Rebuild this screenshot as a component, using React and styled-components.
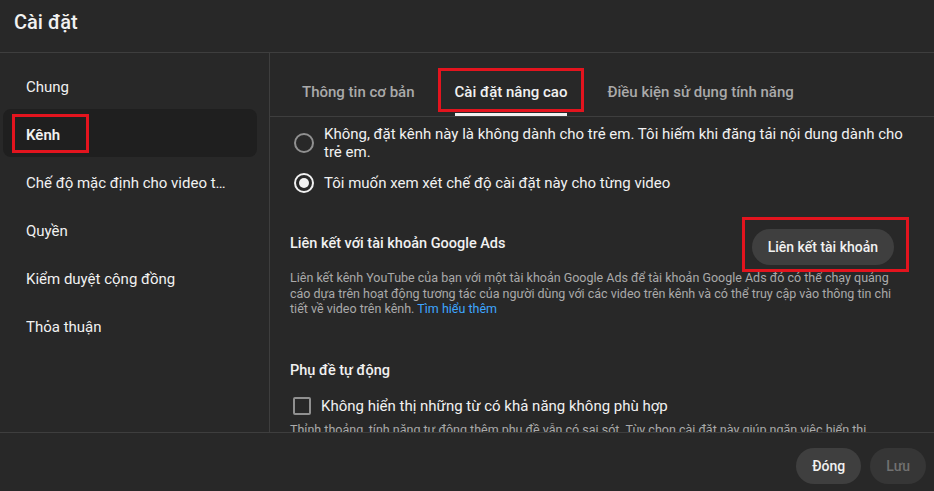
import { styled, createGlobalStyle } from 'styled-components';

const GlobalStyle = createGlobalStyle`
  html, body {
    margin: 0;
    padding: 0;
    background: #282828;
  }
  body {
    font-family: Roboto, 'Noto Sans', Arial, sans-serif;
    color: #f1f1f1;
  }
  * {
    box-sizing: border-box;
  }
`;

const Dialog = styled.div`
  width: 934px;
  height: 491px;
  background: #282828;
  display: flex;
  flex-direction: column;
  overflow: hidden;
`;

const Header = styled.header`
  height: 53px;
  flex-shrink: 0;
  padding: 8px 14px 0;
  border-bottom: 1px solid #3e3e3e;
  h1 {
    margin: 0;
    font-size: 20px;
    line-height: 28px;
    font-weight: 500;
    color: #f1f1f1;
  }
`;

const Body = styled.div`
  flex: 1;
  display: flex;
  min-height: 0;
`;

const Sidebar = styled.nav`
  width: 270px;
  flex-shrink: 0;
  padding: 8px 12px 0 3px;
  border-right: 1px solid #3e3e3e;
  display: flex;
  flex-direction: column;
`;

const NavItem = styled.div`
  position: relative;
  height: 48px;
  padding: 3px 30px 0 23px;
  display: flex;
  align-items: center;
  border-radius: 8px;
  font-size: 15px;
  font-weight: ${(p) => (p.$active ? 600 : 400)};
  background: ${(p) => (p.$active ? '#1f1f1f' : 'transparent')};
  color: #f1f1f1;
  span {
    white-space: nowrap;
    overflow: hidden;
    text-overflow: ellipsis;
  }
`;

const Highlight = styled.div`
  position: absolute;
  top: ${(p) => p.$top}px;
  left: ${(p) => p.$left}px;
  right: ${(p) => p.$right}px;
  bottom: ${(p) => p.$bottom}px;
  border: 3px solid #e3141e;
  pointer-events: none;
`;

const Panel = styled.section`
  flex: 1;
  display: flex;
  flex-direction: column;
  min-width: 0;
`;

const TabBar = styled.div`
  height: 64px;
  flex-shrink: 0;
  display: flex;
  align-items: flex-end;
  padding-left: 12px;
  border-bottom: 1px solid #3e3e3e;
`;

const Tab = styled.div`
  position: relative;
  height: 48px;
  margin: 0 20px;
  display: flex;
  align-items: center;
  font-size: 15px;
  font-weight: 500;
  color: ${(p) => (p.$active ? '#f1f1f1' : '#aaaaaa')};
  border-bottom: 3px solid ${(p) => (p.$active ? '#f1f1f1' : 'transparent')};
  padding-top: 3px;
`;

const Scroll = styled.div`
  flex: 1;
  overflow: hidden;
  padding: 8px 24px 0 20px;
`;

const RadioRow = styled.label`
  display: flex;
  align-items: center;
  gap: 10px;
  padding-left: 4px;
  margin-bottom: ${(p) => p.$mb || 0}px;
  font-size: 15px;
  line-height: 18px;
  color: #f1f1f1;
`;

const RadioCircle = styled.span`
  width: 20px;
  height: 20px;
  flex-shrink: 0;
  border-radius: 50%;
  border: 2px solid ${(p) => (p.$checked ? '#f1f1f1' : '#909090')};
  display: flex;
  align-items: center;
  justify-content: center;
  &::after {
    content: '';
    width: 10px;
    height: 10px;
    border-radius: 50%;
    background: ${(p) => (p.$checked ? '#f1f1f1' : 'transparent')};
  }
`;

const Section = styled.div`
  margin-top: ${(p) => p.$mt}px;
`;

const SectionHead = styled.div`
  display: flex;
  justify-content: space-between;
  align-items: flex-start;
  padding-right: 16px;
`;

const SectionTitle = styled.h3`
  margin: 0;
  font-size: 14.5px;
  line-height: 20px;
  font-weight: 500;
  color: #f1f1f1;
`;

const PillButton = styled.button`
  position: relative;
  height: 36px;
  padding: 0 16px;
  border: none;
  border-radius: 18px;
  font-family: Roboto, Arial, sans-serif;
  font-size: 14px;
  font-weight: 500;
  background: ${(p) => (p.$disabled ? '#363636' : '#3f3f3f')};
  color: ${(p) => (p.$disabled ? '#717171' : '#f1f1f1')};
  margin-top: ${(p) => p.$mt || 0}px;
`;

const Desc = styled.p`
  margin: ${(p) => p.$mt || 0}px 0 0;
  max-width: ${(p) => p.$w || 618}px;
  font-size: 12.5px;
  line-height: 15.5px;
  color: #aaaaaa;
  a {
    color: #3ea6ff;
    text-decoration: none;
  }
`;

const CheckRow = styled.label`
  display: flex;
  align-items: center;
  gap: 10px;
  margin-top: 15px;
  padding-left: 3px;
  font-size: 15px;
  line-height: 20px;
  color: #f1f1f1;
`;

const CheckBox = styled.span`
  width: 18px;
  height: 18px;
  flex-shrink: 0;
  border: 2px solid #909090;
  border-radius: 2px;
`;

const Footer = styled.footer`
  height: 59px;
  flex-shrink: 0;
  border-top: 1px solid #3e3e3e;
  display: flex;
  justify-content: flex-end;
  align-items: flex-start;
  gap: 9px;
  padding: 15px 8px 0 0;
`;

const navItems = [
  'Chung',
  'Kênh',
  'Chế độ mặc định cho video tải lên',
  'Quyền',
  'Kiểm duyệt cộng đồng',
  'Thỏa thuận',
];

const tabs = ['Thông tin cơ bản', 'Cài đặt nâng cao', 'Điều kiện sử dụng tính năng'];

export default function App() {
  return (
    <Dialog>
      <GlobalStyle />
      <Header>
        <h1>Cài đặt</h1>
      </Header>
      <Body>
        <Sidebar>
          {navItems.map((item) => (
            <NavItem key={item} $active={item === 'Kênh'}>
              <span>{item}</span>
              {item === 'Kênh' && <Highlight $top={5} $left={9} $right={168} $bottom={4} />}
            </NavItem>
          ))}
        </Sidebar>
        <Panel>
          <TabBar>
            {tabs.map((tab, i) => (
              <Tab key={tab} $active={i === 1}>
                {tab}
                {i === 1 && <Highlight $top={0} $left={-17} $right={-17} $bottom={1} />}
              </Tab>
            ))}
          </TabBar>
          <Scroll>
            <RadioRow $mb={12}>
              <RadioCircle />
              <span>
                Không, đặt kênh này là không dành cho trẻ em. Tôi hiếm khi đăng tải nội dung dành cho
                trẻ em.
              </span>
            </RadioRow>
            <RadioRow>
              <RadioCircle $checked />
              <span>Tôi muốn xem xét chế độ cài đặt này cho từng video</span>
            </RadioRow>

            <Section $mt={41}>
              <SectionHead>
                <SectionTitle>Liên kết với tài khoản Google Ads</SectionTitle>
                <PillButton $mt={-5}>
                  Liên kết tài khoản
                  <Highlight $top={-12} $left={-10} $right={-15} $bottom={-7} />
                </PillButton>
              </SectionHead>
              <Desc $mt={5}>
                Liên kết kênh YouTube của bạn với một tài khoản Google Ads để tài khoản Google Ads đó có
                thể chạy quảng cáo dựa trên hoạt động tương tác của người dùng với các video trên kênh và
                có thể truy cập vào thông tin chi tiết về video trên kênh. <a href="#">Tìm hiểu thêm</a>
              </Desc>
            </Section>

            <Section $mt={44}>
              <SectionTitle>Phụ đề tự động</SectionTitle>
              <CheckRow>
                <CheckBox />
                <span>Không hiển thị những từ có khả năng không phù hợp</span>
              </CheckRow>
              <Desc $mt={6} $w={600}>
                Thỉnh thoảng, tính năng tự động thêm phụ đề vẫn có sai sót. Tùy chọn cài đặt này giúp ngăn
                việc hiển thị những từ có khả năng không phù hợp trong phụ đề tự động.
              </Desc>
            </Section>
          </Scroll>
        </Panel>
      </Body>
      <Footer>
        <PillButton>Đóng</PillButton>
        <PillButton $disabled>Lưu</PillButton>
      </Footer>
    </Dialog>
  );
}
